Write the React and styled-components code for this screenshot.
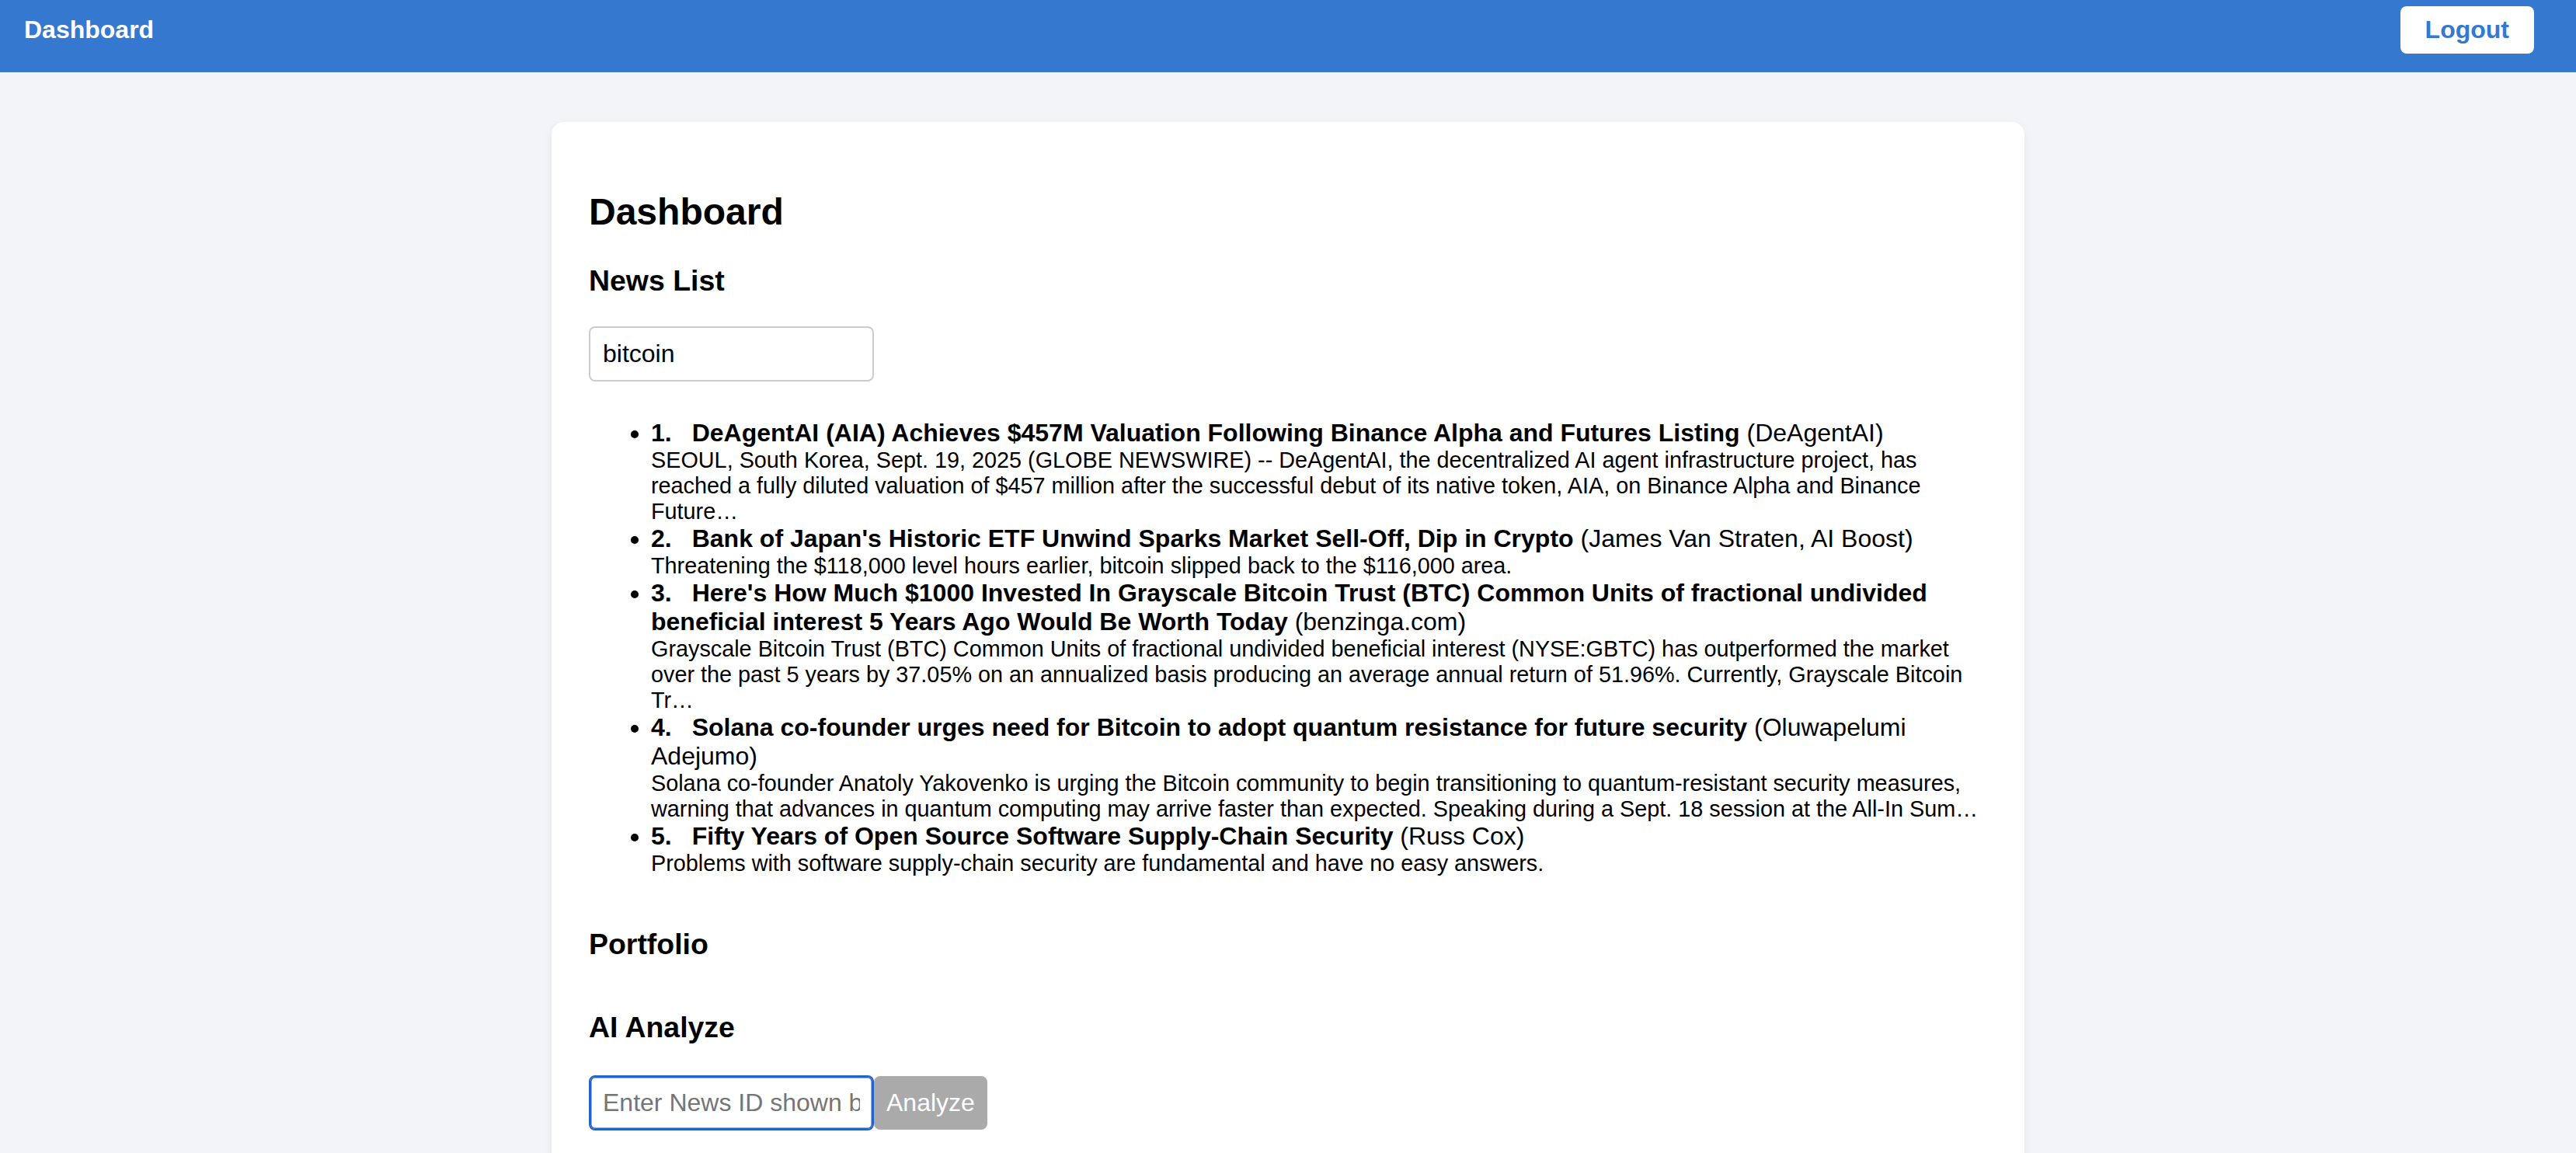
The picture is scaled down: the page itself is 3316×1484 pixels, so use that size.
import React, { useState } from 'react';
import styled, { createGlobalStyle } from 'styled-components';

// News data as shown in the list
const NEWS = [
  {
    title: 'DeAgentAI (AIA) Achieves $457M Valuation Following Binance Alpha and Futures Listing',
    source: 'DeAgentAI',
    summary:
      'SEOUL, South Korea, Sept. 19, 2025 (GLOBE NEWSWIRE) -- DeAgentAI, the decentralized AI agent infrastructure project, has reached a fully diluted valuation of $457 million after the successful debut of its native token, AIA, on Binance Alpha and Binance Future…'
  },
  {
    title: "Bank of Japan's Historic ETF Unwind Sparks Market Sell-Off, Dip in Crypto",
    source: 'James Van Straten, AI Boost',
    summary: 'Threatening the $118,000 level hours earlier, bitcoin slipped back to the $116,000 area.'
  },
  {
    title:
      "Here's How Much $1000 Invested In Grayscale Bitcoin Trust (BTC) Common Units of fractional undivided beneficial interest 5 Years Ago Would Be Worth Today",
    source: 'benzinga.com',
    summary:
      'Grayscale Bitcoin Trust (BTC) Common Units of fractional undivided beneficial interest (NYSE:GBTC) has outperformed the market over the past 5 years by 37.05% on an annualized basis producing an average annual return of 51.96%. Currently, Grayscale Bitcoin Tr…'
  },
  {
    title: 'Solana co-founder urges need for Bitcoin to adopt quantum resistance for future security',
    source: 'Oluwapelumi Adejumo',
    summary:
      'Solana co-founder Anatoly Yakovenko is urging the Bitcoin community to begin transitioning to quantum-resistant security measures, warning that advances in quantum computing may arrive faster than expected. Speaking during a Sept. 18 session at the All-In Sum…'
  },
  {
    title: 'Fifty Years of Open Source Software Supply-Chain Security',
    source: 'Russ Cox',
    summary: 'Problems with software supply-chain security are fundamental and have no easy answers.'
  }
];

const GlobalStyle = createGlobalStyle`
  html, body {
    margin: 0;
    padding: 0;
    background: #f3f4f8;
    font-family: "Liberation Sans", Arial, sans-serif;
    color: #000;
  }
`;

const Header = styled.header`
  display: flex;
  justify-content: space-between;
  align-items: center;
  background: #3578d0;
  padding: 8px 54px 24px 31px;
`;

const Brand = styled.div`
  color: #fff;
  font-size: 32px;
  font-weight: 700;
`;

const LogoutButton = styled.button`
  background: #fff;
  color: #3578d0;
  border: none;
  border-radius: 8px;
  padding: 12px 32px;
  font-family: inherit;
  font-size: 32px;
  font-weight: 700;
  line-height: 37px;
  cursor: pointer;
`;

const Card = styled.main`
  max-width: 1800px;
  margin: 64px auto 0;
  padding: 48px 48px 80px;
  background: #fff;
  border-radius: 16px;
  box-shadow: 0 4px 14px rgba(0, 0, 0, 0.06);
`;

const PageTitle = styled.h2`
  font-size: 48px;
  font-weight: 700;
  margin: 40px 0;
`;

const SectionTitle = styled.h3`
  font-size: 37.44px;
  font-weight: 700;
  margin: ${p => p.$top || 0}px 0 ${p => p.$bottom || 0}px;
`;

const TextInput = styled.input`
  display: block;
  box-sizing: border-box;
  width: 367px;
  height: 71px;
  padding: 0 16px;
  font-family: inherit;
  font-size: 32px;
  color: #000;
  border: 2px solid ${p => (p.$focused ? '#2362c8' : '#cccccc')};
  box-shadow: ${p => (p.$focused ? 'inset 0 0 0 1.5px #2362c8' : 'none')};
  border-radius: 8px;
  outline: none;
  caret-color: #000;

  &::placeholder {
    color: #757575;
  }
`;

const NewsList = styled.ul`
  margin: 48px 0 0;
  padding-left: 80px;
  list-style: disc;
`;

const NewsItem = styled.li`
  font-size: 32px;
`;

const Num = styled.strong`
  margin-right: 26px;
`;

const Summary = styled.div`
  font-size: 28.8px;
`;

const AnalyzeRow = styled.div`
  display: flex;
  align-items: center;
`;

const AnalyzeButton = styled.button`
  background: #aaaaaa;
  color: #fff;
  border: none;
  border-radius: 8px;
  padding: 16px;
  font-family: inherit;
  font-size: 32px;
  line-height: 37px;
  cursor: not-allowed;
`;

const App = () => {
  const [query, setQuery] = useState('bitcoin');
  const [newsId, setNewsId] = useState('');

  return (
    <>
      <GlobalStyle />
      <Header>
        <Brand>Dashboard</Brand>
        <LogoutButton>Logout</LogoutButton>
      </Header>

      <Card>
        <PageTitle>Dashboard</PageTitle>

        <SectionTitle $bottom={37}>News List</SectionTitle>
        <TextInput value={query} onChange={e => setQuery(e.target.value)} />

        <NewsList>
          {NEWS.map((n, i) => (
            <NewsItem key={i}>
              <Num>{i + 1}.</Num>
              <strong>{n.title}</strong> ({n.source})
              <Summary>{n.summary}</Summary>
            </NewsItem>
          ))}
        </NewsList>

        <SectionTitle $top={66}>Portfolio</SectionTitle>

        <SectionTitle $top={64} $bottom={40}>AI Analyze</SectionTitle>
        <AnalyzeRow>
          <TextInput
            $focused
            autoFocus
            placeholder="Enter News ID shown below"
            value={newsId}
            onChange={e => setNewsId(e.target.value)}
          />
          <AnalyzeButton disabled={!newsId}>Analyze</AnalyzeButton>
        </AnalyzeRow>
      </Card>
    </>
  );
};

export default App;
